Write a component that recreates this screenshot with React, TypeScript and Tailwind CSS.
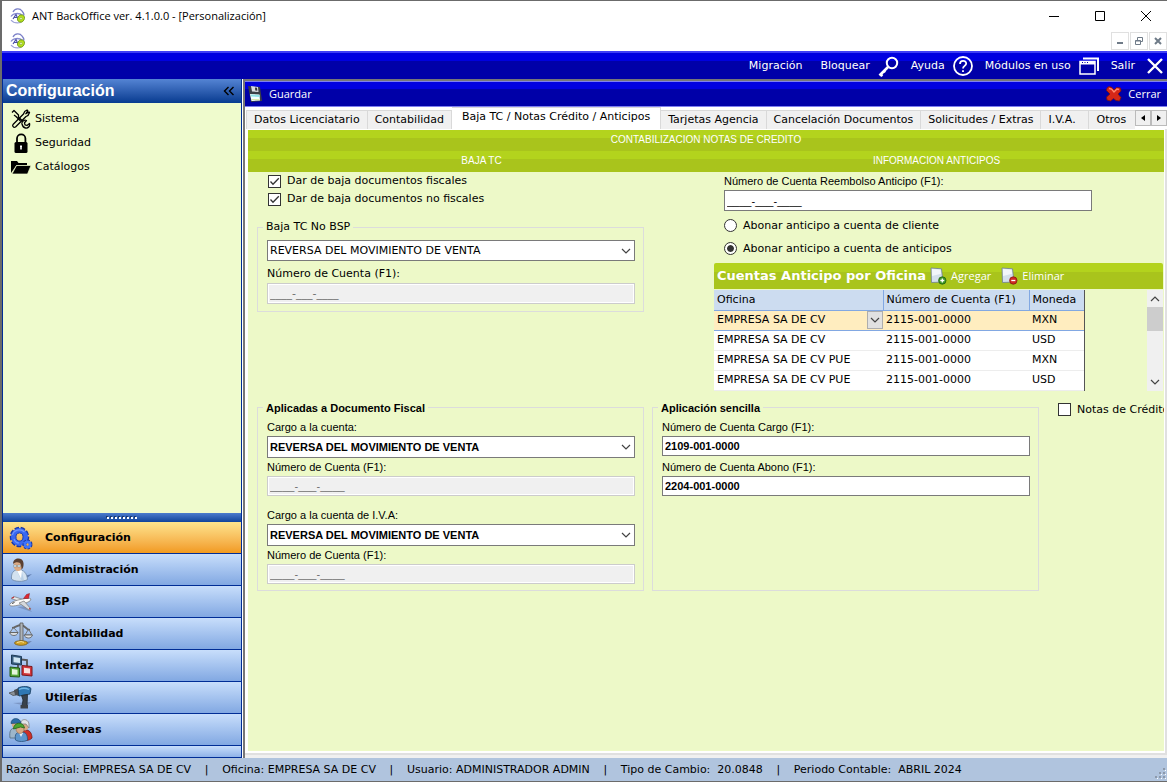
import { useState } from 'react';
import type { ReactNode } from 'react';

const tabs = [
  'Datos Licenciatario',
  'Contabilidad',
  'Baja TC / Notas Crédito / Anticipos',
  'Tarjetas Agencia',
  'Cancelación Documentos',
  'Solicitudes / Extras',
  'I.V.A.',
  'Otros',
];

const accounts = [
  { office: 'EMPRESA SA DE CV', account: '2115-001-0000', currency: 'MXN' },
  { office: 'EMPRESA SA DE CV', account: '2115-001-0000', currency: 'USD' },
  { office: 'EMPRESA SA DE CV PUE', account: '2115-001-0000', currency: 'MXN' },
  { office: 'EMPRESA SA DE CV PUE', account: '2115-001-0000', currency: 'USD' },
];

const status = [
  'Razón Social: EMPRESA SA DE CV',
  'Oficina: EMPRESA SA DE CV',
  'Usuario: ADMINISTRADOR ADMIN',
  'Tipo de Cambio:  20.0848',
  'Periodo Contable:  ABRIL 2024',
];

const MASK = '____-___-____';

function LogoIcon() {
  return (
    <svg width="16" height="16" viewBox="0 0 16 16" fill="none" className="shrink-0">
      <path d="M3 4C5 0 10 0 12 3c1.500 1.500 2 3 2 4.500" stroke="#7b80c8" strokeWidth="1.300" />
      <path d="M1 8.500C3 5 9 4.500 13 7.500" stroke="#8a8ed0" strokeWidth="1.300" />
      <path d="M1 12c2 2.500 6 3.500 10 2.500" stroke="#9ea2d8" strokeWidth="1.200" />
      <path d="M3 11l3-4.500L8 11M4.500 9.500h4" stroke="#4a50a8" strokeWidth="1.200" />
      <ellipse cx="11" cy="10.500" rx="3.300" ry="3.800" fill="#b6e01c" stroke="#6f9a1e" strokeWidth=".8" transform="rotate(25 11 10.5)" />
      <circle cx="11" cy="10.500" r="1.200" fill="#eefac0" stroke="#6f9a1e" strokeWidth=".5" />
    </svg>
  );
}

function KeyIcon() {
  return (
    <svg width="21" height="21" viewBox="0 0 21 21" fill="none" stroke="#fff" className="shrink-0">
      <circle cx="14" cy="7" r="5.200" strokeWidth="2" />
      <path d="M10 11l-8.500 8.500M2 18l2.500 2M5.500 14.500l1.500 2" strokeWidth="2.600" />
    </svg>
  );
}

function HelpIcon() {
  return (
    <svg width="20" height="20" viewBox="0 0 20 20" fill="none" stroke="#fff" strokeWidth="1.800" className="shrink-0">
      <circle cx="10" cy="10" r="9" />
      <path d="M7 8c0-4 6.200-4 6.200-.5C13.200 10 10 9.800 10 12.500" />
      <path d="M10 14.200v1.800" />
    </svg>
  );
}

function WindowsIcon() {
  return (
    <svg width="20" height="18" viewBox="0 0 20 18" fill="none" stroke="#fff" className="shrink-0">
      <path d="M4 1.500h15V14" strokeWidth="2" />
      <path d="M1 4.500h15V17H1z" strokeWidth="1.500" />
      <path d="M1 6h15" strokeWidth="3" />
      <path d="M3 5.500h1M5.500 5.500h1M8 5.500h1" stroke="#0000a8" />
    </svg>
  );
}

function CrossIcon() {
  return (
    <svg width="16" height="16" viewBox="0 0 16 16" stroke="#fff" strokeWidth="2.400" className="shrink-0">
      <path d="M1 1l14 14M15 1L1 15" />
    </svg>
  );
}

function FloppyIcon() {
  return (
    <svg width="16" height="18" viewBox="0 0 16 18" className="shrink-0">
      <path d="M1 1l12 1 2 14-11 1z" fill="#3a3f44" />
      <path d="M4 1l7 1 .5 5-6.500-.5z" fill="#d9dcdf" />
      <path d="M8 2.500l2 .2.300 3-2-.2z" fill="#333" />
      <path d="M3 9l9.500.5.500 6-8.500.5z" fill="#f4ffff" />
      <path d="M3.500 9.500l9 .5.200 2-8.700-.5z" fill="#8fe3e6" />
      <path d="M4.500 14.500l8 .2" stroke="#d8e8a0" />
    </svg>
  );
}

function CloseRedIcon() {
  return (
    <svg width="16" height="16" viewBox="0 0 16 16" className="shrink-0">
      <path d="M3 .5l3 1 2 2.500 2.500-2.500 4 .5.500 3-3 3 3 3.500-1.500 3.500-3.500-.5-2.500-2-3 2.500-3.500-1-.5-3L4 8 .5 4.500 1 2z" fill="#d62718" stroke="#7e130c" strokeWidth=".8" />
      <path d="M3 2.500l2.500.5L8 6l3-3 2 .5" stroke="#ff8a72" strokeWidth="1.300" fill="none" />
    </svg>
  );
}

function ToolsIcon() {
  return (
    <svg width="20" height="20" viewBox="0 0 20 20" fill="none" stroke="#000" strokeWidth="1.300" strokeLinejoin="round" className="shrink-0">
      <path d="M2 15.500L12.500 5c.5-2 2-3.500 3.500-4l.8.800-2 3L18 3l.5.500c-.5 2-2 3.500-3.500 4L4.500 18c-2 1-3.500-1-2.500-2.500z" />
      <path d="M1 3.500l2-2L7.500 6v2l4 4M3 6l2 1.500 4.500 4.500" />
      <path d="M11 15c-.5-2.500 2-4.500 4.500-3.500l-2 2.300.5 2 2 .7 2.500-2c.7 3-1.500 5-4 4.500-2-.3-3-2-3.500-4z" />
    </svg>
  );
}

function LockIcon() {
  return (
    <svg width="20" height="20" viewBox="0 0 20 20" className="shrink-0">
      <path d="M6 10V5.500a4.200 4.200 0 0 1 8.400 0V10" fill="none" stroke="#000" strokeWidth="1.800" />
      <rect x="3.500" y="9" width="13" height="11" rx="1.500" fill="#000" />
      <path d="M10 12.500v4M9 13.300h2" stroke="#fff" strokeWidth="1.600" />
    </svg>
  );
}

function FolderIcon() {
  return (
    <svg width="20" height="14" viewBox="0 0 20 14" className="shrink-0">
      <path d="M0 13V1h6l1.500 2H16v2H5.500z" fill="#000" />
      <path d="M5.500 5.500H20L16.500 14H1z" fill="#000" stroke="#effbcd" strokeWidth=".7" />
    </svg>
  );
}

function GearsIcon() {
  return (
    <svg width="24" height="24" viewBox="0 0 24 24" fill="none" className="shrink-0">
      <ellipse cx="10.500" cy="11" rx="6.500" ry="7" stroke="#1838a8" strokeWidth="6.500" strokeDasharray="3.400 1.200" />
      <ellipse cx="10.500" cy="11" rx="6" ry="6.500" stroke="#3a68f0" strokeWidth="5" />
      <path d="M3.500 9c1-5 8-7 12-3M5 13c1 3 3 4 5 4" stroke="#6d96ff" strokeWidth="1.200" />
      <ellipse cx="10.500" cy="11" rx="3.600" ry="4.200" stroke="#1838a8" strokeWidth=".7" />
      <circle cx="18.500" cy="18.500" r="3.200" stroke="#1838a8" strokeWidth="3.600" strokeDasharray="2 .9" />
      <circle cx="18.500" cy="18.500" r="2.600" stroke="#3f74fa" strokeWidth="2.600" />
    </svg>
  );
}

function PersonIcon() {
  return (
    <svg width="24" height="24" viewBox="0 0 24 24" className="shrink-0">
      <path d="M15 18l8-2-5 4z" fill="#5f7cae" />
      <path d="M2.500 21c-.5-6 2-9 6.500-9.500 6 0 9 4 9.500 10-4 2.500-13 2.500-16-.5z" fill="#d3e2f0" stroke="#6d87a5" strokeWidth=".8" />
      <path d="M8 13l5 1 2 8h-3z" fill="#b9d0e6" />
      <path d="M8 12.500l4 8 1-8z" fill="#fff" />
      <ellipse cx="9" cy="7.500" rx="4.300" ry="5.500" fill="#dcaa84" />
      <path d="M4 6C4-1 14-1 14.500 5c.3 3-.5 5.500-2 6.500 0-3-.5-5-1.500-6.500-2-1-5-1-7 1z" fill="#5a4032" />
      <path d="M4.500 7h3v2h-3zM8.500 7h3v2h-3z" fill="#cfe4ee" stroke="#777" strokeWidth=".4" />
    </svg>
  );
}

function PlaneIcon() {
  return (
    <svg width="24" height="24" viewBox="0 0 24 24" className="shrink-0">
      <path d="M8 17l10-1 5 6-6-2z" fill="#7b95c4" />
      <path d="M2 8.500l3-2 9 3-3 2z" fill="#e6e8ea" stroke="#777" strokeWidth=".7" />
      <path d="M1 14c2-3 11-5 19-6l2 1-1 2c-5 3-14 5-18 5-2 0-3-1-2-2z" fill="#fafafa" stroke="#777" strokeWidth=".7" />
      <path d="M10 13l5-2 7 8-2 1z" fill="#d6d9dd" stroke="#777" strokeWidth=".7" />
      <path d="M14.500 8.500l3-4 3-1-1 5z" fill="#e02832" stroke="#871820" strokeWidth=".5" />
      <path d="M3 8.300l2-1.300M20 18.500l1.500.5" stroke="#c0303a" strokeWidth="1.200" />
      <path d="M3 13.500l2.500-1" stroke="#444" />
    </svg>
  );
}

function ScaleIcon() {
  return (
    <svg width="24" height="24" viewBox="0 0 24 24" className="shrink-0">
      <path d="M14 20l9-1-4 3z" fill="#6c83ad" />
      <path d="M3 6c3 0 5-3 9-3s5 5 9 5" fill="none" stroke="#666" strokeWidth="1.800" />
      <path d="M4 6L1 10.500h8L5 6M19 8l-3 5h7l-3-5" fill="none" stroke="#777" />
      <path d="M.5 10.500H9c-1 4-7 4-8.500 0zM15 13h8.500c-1 4-7 4-8.500 0z" fill="#dcdfe2" stroke="#555" strokeWidth=".8" />
      <path d="M11 1h3v18h-3z" fill="#aeb4b9" stroke="#555" strokeWidth=".8" />
      <ellipse cx="12" cy="21" rx="6.500" ry="2.300" fill="#d4a429" stroke="#7a5a12" strokeWidth=".8" />
      <path d="M8 20.500l4-1 3 .8" stroke="#f6e09a" fill="none" />
    </svg>
  );
}

function ModulesIcon() {
  return (
    <svg width="24" height="24" viewBox="0 0 24 24" className="shrink-0">
      <path d="M12 5.500l6 .5v7M9 10v4" fill="none" stroke="#555" strokeWidth="1.800" />
      <path d="M2.500 1l10 1.500V11l-10-1z" fill="#3a5f80" stroke="#1e3b56" />
      <path d="M4.500 3l6.500 1v5l-6.500-.7z" fill="#cfe6f2" />
      <path d="M1 13l9.500 1v9L1 22.500z" fill="#57a83a" stroke="#235718" />
      <path d="M3 15l5.500.7v5l-5.500-.2z" fill="#e5f5dc" />
      <path d="M13 11.500l10 1V22l-10-1z" fill="#d4373b" stroke="#7b171c" />
      <path d="M15 13.800l6 .7v5l-6-.6z" fill="#fae2e0" />
    </svg>
  );
}

function DrillIcon() {
  return (
    <svg width="24" height="24" viewBox="0 0 24 24" className="shrink-0">
      <path d="M4 17l18-1-4 4z" fill="#7b95c4" />
      <path d="M0 7l6-2 1 4-3 .5z" fill="#8c9298" stroke="#444" strokeWidth=".7" />
      <path d="M5 4l5-2v8l-4-1z" fill="#4a4e53" />
      <path d="M9 2c4-2 11-2 13 .5L21 8 10 10z" fill="#2f78b4" stroke="#143a5c" strokeWidth=".8" />
      <path d="M10 3.500c3-1.500 7-1.500 10 0" stroke="#72b7e6" strokeWidth="1.300" fill="none" />
      <path d="M12.500 9.500l6-1L18 20h-5l1-6z" fill="#39424c" stroke="#1e2933" strokeWidth=".8" />
      <path d="M11.500 19h7.500v3.500h-7.500z" fill="#3c4046" />
    </svg>
  );
}

function PeopleIcon() {
  return (
    <svg width="24" height="24" viewBox="0 0 24 24" className="shrink-0">
      <path d="M13 21c-1-6 1-9 5-9 4 1 5 5 5 8-3 3-7 3-10 1z" fill="#cd3028" stroke="#731814" strokeWidth=".8" />
      <ellipse cx="16" cy="7.500" rx="3.800" ry="5" fill="#d7a984" />
      <path d="M11.500 6c0-6 8.500-6 8.500 1v3l-3-4z" fill="#e2e4e6" stroke="#777" strokeWidth=".7" />
      <path d="M1 20c-1-7 1-10 5-10s7 4 7 10z" fill="#9db6ca" stroke="#50697f" strokeWidth=".8" />
      <ellipse cx="6.500" cy="6" rx="3.800" ry="4.500" fill="#d7a984" />
      <path d="M2 5.500C2-1 11-1 12 5z" fill="#2d6da8" stroke="#17436b" strokeWidth=".6" />
      <path d="M6.500 22c-1-6 1-8 5.500-8s6.500 2 6.500 8c-3 2-9 2-12 0z" fill="#5e96cc" stroke="#28527d" strokeWidth=".8" />
      <path d="M10 15l2 4 2-4z" fill="#e8f0f8" />
      <ellipse cx="11" cy="11" rx="4" ry="4.500" fill="#d7a984" stroke="#865d40" strokeWidth=".5" />
      <path d="M4.500 11c0-7 10-8 11-1l-4-1z" fill="#4ca62f" stroke="#23651a" strokeWidth=".8" />
    </svg>
  );
}

function PageIcon({ remove }: { remove?: boolean }) {
  return (
    <svg width="17" height="18" viewBox="0 0 17 18" className="shrink-0">
      <path d="M1 1l10.500.8L13 15l-11.500.5z" fill="#d4e0ec" stroke="#6f7f90" strokeWidth=".8" />
      <path d="M2 2l8.500.8.600 4L2 9z" fill="#f2f6fa" />
      <circle cx="12.300" cy="13.500" r="3.700" fill={remove ? '#cf2b24' : '#3f9a26'} stroke={remove ? '#861510' : '#205c12'} strokeWidth=".8" />
      <path d={remove ? 'M10.300 13.500h4' : 'M10.300 13.500h4M12.300 11.500v4'} stroke="#fff" strokeWidth="1.300" />
    </svg>
  );
}

function Chevron({ className = '' }: { className?: string }) {
  return (
    <svg width="10" height="6" viewBox="0 0 10 6" fill="none" stroke="#444" strokeWidth="1.200" className={className}>
      <path d="M1 1l4 4 4-4" />
    </svg>
  );
}

const navItems = [
  { name: 'Configuración', icon: <GearsIcon /> },
  { name: 'Administración', icon: <PersonIcon /> },
  { name: 'BSP', icon: <PlaneIcon /> },
  { name: 'Contabilidad', icon: <ScaleIcon /> },
  { name: 'Interfaz', icon: <ModulesIcon /> },
  { name: 'Utilerías', icon: <DrillIcon /> },
  { name: 'Reservas', icon: <PeopleIcon /> },
];

function TextField({ id, label, value, disabled, className }: { id: string; label: string; value: string; disabled?: boolean; className: string }) {
  return (
    <div className="flex flex-col gap-0.5">
      <label htmlFor={id} className="h-3.5 leading-[14px] whitespace-nowrap">{label}</label>
      <input
        id={id}
        defaultValue={value}
        disabled={disabled}
        className={`${className} w-full border border-[#7a7a7a] bg-white px-0.5 disabled:border-[#ccc] disabled:bg-[#f0f0f0] disabled:text-[#6d6d6d] disabled:shadow-[inset_0_0_0_1px_#fff]`}
      />
    </div>
  );
}

function Select({ id, className, label }: { id: string; className: string; label?: string }) {
  return (
    <div className="relative flex">
      <select id={id} aria-label={label} className={`${className} w-full appearance-none border border-[#7a7a7a] bg-white px-0.5`}>
        <option>REVERSA DEL MOVIMIENTO DE VENTA</option>
      </select>
      <Chevron className="pointer-events-none absolute top-2 right-1" />
    </div>
  );
}

function CheckBox({ label, checked }: { label: string; checked?: boolean }) {
  return (
    <label className="flex h-[18px] items-center gap-1.5 whitespace-nowrap">
      <span className="relative flex">
        <input type="checkbox" defaultChecked={checked} className="peer size-[13px] appearance-none border border-[#333] bg-white" />
        <svg width="13" height="13" viewBox="0 0 13 13" fill="none" stroke="#333" strokeWidth="1.300" className="pointer-events-none absolute inset-0 hidden peer-checked:block">
          <path d="M2.500 6.500L5 9.200l5.800-6" />
        </svg>
      </span>
      {label}
    </label>
  );
}

function MdiButton({ label, children }: { label: string; children: ReactNode }) {
  return (
    <button aria-label={label} className="flex h-[18px] w-[18px] items-center justify-center border border-[#e0e0e0]">
      {children}
    </button>
  );
}

function TitleBar() {
  return (
    <header className="bg-white">
      <div className="flex h-[30px] items-center pl-2">
        <LogoIcon />
        <h1 className="ml-1.5 font-['Open_Sans','Noto_Sans',sans-serif] text-[11px]">ANT BackOffice ver. 4.1.0.0 - [Personalización]</h1>
        <div className="ml-auto flex items-center gap-9 pr-4">
          <button aria-label="Minimizar">
            <svg width="10" height="10" viewBox="0 0 10 10" stroke="#000"><path d="M0 5.500h10" /></svg>
          </button>
          <button aria-label="Maximizar">
            <svg width="10" height="10" viewBox="0 0 10 10" stroke="#000" fill="none"><path d="M.5.500h9v9h-9z" /></svg>
          </button>
          <button aria-label="Cerrar ventana">
            <svg width="10" height="10" viewBox="0 0 10 10" stroke="#000"><path d="M0 0l10 10M10 0L0 10" /></svg>
          </button>
        </div>
      </div>
      <div className="flex h-5 items-center pl-2">
        <LogoIcon />
        <div className="ml-auto flex gap-px">
          <MdiButton label="Minimizar documento">
            <svg width="8" height="8" viewBox="0 0 8 8" stroke="#6f7b88" strokeWidth="2"><path d="M1 6h6" /></svg>
          </MdiButton>
          <MdiButton label="Restaurar documento">
            <svg width="8" height="8" viewBox="0 0 8 8" stroke="#6f7b88" fill="none"><path d="M2.500 3V.500h5v4H6M.5 3.500h5v4h-5zM.5 4h5" /></svg>
          </MdiButton>
          <MdiButton label="Cerrar documento">
            <svg width="8" height="8" viewBox="0 0 8 8" stroke="#6f7b88" strokeWidth="2"><path d="M1 1l6 6M7 1L1 7" /></svg>
          </MdiButton>
        </div>
      </div>
    </header>
  );
}

function Sidebar() {
  const [active, setActive] = useState('Configuración');

  return (
    <aside className="flex w-60 shrink-0 flex-col border-x border-[#002d96] bg-[#effbcd]">
      <div className="flex h-6 items-center justify-between bg-linear-to-b from-[#5484d4] to-[#053b90] pr-1.5 pl-[3px] text-white">
        <h2 className="font-['Liberation_Sans',sans-serif] text-base font-bold">Configuración</h2>
        <button aria-label="Contraer panel">
          <svg width="12" height="10" viewBox="0 0 12 10" fill="none" stroke="#000" strokeWidth="1.400"><path d="M5.500 1l-4 4 4 4M10.500 1l-4 4 4 4" /></svg>
        </button>
      </div>
      <nav className="flex flex-1 flex-col pt-1 pl-2">
        <a href="#sistema" className="flex h-6 items-center gap-1"><ToolsIcon />Sistema</a>
        <a href="#seguridad" className="flex h-6 items-center gap-1"><LockIcon />Seguridad</a>
        <a href="#catalogos" className="flex h-6 items-center gap-1"><FolderIcon />Catálogos</a>
      </nav>
      <div className="flex h-[9px] items-center justify-center gap-0.5 bg-linear-to-b from-[#4b7ccd] to-[#0e439a]">
        {Array.from({ length: 8 }, (_, i) => (
          <span key={i} className="size-0.5 bg-white shadow-[-1px_-1px_0_#1c3a70]" />
        ))}
      </div>
      <nav className="flex flex-col text-[11px] font-bold">
        {navItems.map((item) => (
          <button
            key={item.name}
            onClick={() => setActive(item.name)}
            className={`flex h-8 items-center gap-3 border-b border-[#002d96] bg-linear-to-b pl-1.5 ${
              active === item.name ? 'from-[#fce48c] to-[#f19a1c]' : 'from-[#c8defb] to-[#82a8e2]'
            }`}
          >
            {item.icon}
            {item.name}
          </button>
        ))}
        <div className="h-3 border-b border-[#002d96] bg-linear-to-b from-[#c8defb] to-[#8fb2e8]" />
      </nav>
    </aside>
  );
}

function AccountsTable() {
  return (
    <div>
      <div className="flex h-[26px] items-center rounded-t-xs bg-linear-to-b from-[#b3d31d] from-35% to-[#a9c41c] to-35% pl-[3px] text-white">
        <h3 className="text-[13px] font-bold whitespace-nowrap">Cuentas Anticipo por Oficina</h3>
        <button className="ml-1 flex items-center gap-1 font-['Open_Sans','Noto_Sans',sans-serif] text-[11px]"><PageIcon />Agregar</button>
        <button className="ml-2.5 flex items-center gap-1 font-['Open_Sans','Noto_Sans',sans-serif] text-[11px]"><PageIcon remove />Eliminar</button>
      </div>
      <div className="mt-px flex justify-between">
        <div className="w-[371px] border-r border-[#555] bg-white">
          <table className="w-full table-fixed border-collapse text-left">
            <colgroup>
              <col className="w-[169px]" />
              <col className="w-[146px]" />
              <col />
            </colgroup>
            <thead>
              <tr className="h-5 bg-[#ccdcf0]">
                <th className="border-r border-b border-[#82a8e2] px-[3px] py-0 font-normal">Oficina</th>
                <th className="border-r border-b border-[#82a8e2] px-[3px] py-0 font-normal">Número de Cuenta (F1)</th>
                <th className="border-b border-[#82a8e2] px-[3px] py-0 font-normal">Moneda</th>
              </tr>
            </thead>
            <tbody>
              {accounts.map((row, i) => (
                <tr key={i} className={i === 0 ? 'h-5 border-b border-[#82a8e2] bg-[#ffedbf]' : 'h-5 border-b border-[#ededed]'}>
                  <td className="py-0 pl-[3px]">
                    {i === 0 ? (
                      <div className="relative flex">
                        <select aria-label="Oficina" className="h-[18px] w-full appearance-none bg-transparent">
                          <option>{row.office}</option>
                        </select>
                        <span className="pointer-events-none absolute inset-y-0 right-0 flex w-4 items-center justify-center border border-[#adadad] bg-[#e1e1e1]"><Chevron /></span>
                      </div>
                    ) : (
                      row.office
                    )}
                  </td>
                  <td className="px-[3px] py-0">{row.account}</td>
                  <td className="px-[3px] py-0">{row.currency}</td>
                </tr>
              ))}
            </tbody>
          </table>
        </div>
        <div className="flex w-4 flex-col items-center bg-[#f0f0f0]">
          <button aria-label="Subir" className="flex h-[17px] items-center"><Chevron className="rotate-180" /></button>
          <div className="h-6 w-full bg-[#cdcdcd]" />
          <button aria-label="Bajar" className="mt-auto flex h-[17px] items-center"><Chevron /></button>
        </div>
      </div>
    </div>
  );
}

function Radio({ label, checked }: { label: string; checked?: boolean }) {
  return (
    <label className="flex h-[23px] items-center gap-1.5">
      <input
        type="radio"
        name="abono"
        defaultChecked={checked}
        className="size-[13px] appearance-none rounded-full border border-[#333] bg-white bg-clip-content p-0.5 checked:bg-[#333] not-checked:bg-clip-border checked:shadow-[inset_0_0_0_2px_#fff]"
      />
      {label}
    </label>
  );
}

function FormPanel() {
  return (
    <div className="flex-1 overflow-hidden bg-[#edf9c8]">
      <div className="h-[21px] bg-linear-to-b from-[#b3d31d] from-38% to-[#a9c41c] to-38% text-center font-['Liberation_Sans',sans-serif] text-[10px] leading-[19px] text-white">
        CONTABILIZACION NOTAS DE CREDITO
      </div>
      <div className="grid h-[21px] grid-cols-2 bg-linear-to-b from-[#b3d31d] from-38% to-[#a9c41c] to-38% pl-1.5 text-center font-['Liberation_Sans',sans-serif] text-[10px] leading-[19px] text-white">
        <span>BAJA TC</span>
        <span>INFORMACION ANTICIPOS</span>
      </div>
      <div className="flex pl-[9px]">
        <div className="w-[387px] shrink-0">
          <div className="pl-[11px]">
            <CheckBox label="Dar de baja documentos fiscales" checked />
            <CheckBox label="Dar de baja documentos no fiscales" checked />
          </div>
          <fieldset className="mt-3 flex flex-col border border-[#dcdcdc] pt-1.5 pr-2 pb-[7px] pl-[9px]">
            <legend className="-ml-1 h-3.5 px-[3px] leading-[14px]">Baja TC No BSP</legend>
            <Select id="bajaTc" label="Baja TC No BSP" className="h-[21px]" />
            <div className="mt-1.5">
              <TextField id="bajaCuenta" label="Número de Cuenta (F1):" value={MASK} disabled className="h-[21px]" />
            </div>
          </fieldset>
        </div>
        <div className="ml-[70px] flex-1 pt-0.5">
          <div className="w-[378px] pl-2.5">
            <div className="font-['Liberation_Sans',sans-serif]">
              <TextField id="reembolso" label="Número de Cuenta Reembolso Anticipo (F1):" value={MASK} className="h-[21px]" />
            </div>
            <div className="pt-[3px]">
              <Radio label="Abonar anticipo a cuenta de cliente" />
              <Radio label="Abonar anticipo a cuenta de anticipos" checked />
            </div>
          </div>
          <div className="pt-[3px] pr-px">
            <AccountsTable />
          </div>
        </div>
      </div>
      <div className="mt-2.5 flex gap-2 pl-[9px]">
        <fieldset className="w-[387px] shrink-0 border border-[#dcdcdc] pt-[5px] pr-2 pb-1.5 pl-[9px] font-['Liberation_Sans',sans-serif]">
          <legend className="-ml-1 h-3.5 px-[3px] leading-[14px] font-bold">Aplicadas a Documento Fiscal</legend>
          <div className="flex flex-col gap-0.5">
            <label htmlFor="cargo" className="h-3.5 leading-[14px]">Cargo a la cuenta:</label>
            <Select id="cargo" className="h-[22px] font-bold" />
            <TextField id="cargoCuenta" label="Número de Cuenta (F1):" value={MASK} disabled className="h-5" />
          </div>
          <div className="mt-3 flex flex-col gap-0.5">
            <label htmlFor="iva" className="h-3.5 leading-[14px]">Cargo a la cuenta de I.V.A:</label>
            <Select id="iva" className="h-[22px] font-bold" />
            <TextField id="ivaCuenta" label="Número de Cuenta (F1):" value={MASK} disabled className="h-5" />
          </div>
        </fieldset>
        <fieldset className="w-[387px] shrink-0 border border-[#dcdcdc] pt-[5px] pr-2 pl-[9px] font-['Liberation_Sans',sans-serif]">
          <legend className="-ml-1 h-3.5 px-[3px] leading-[14px] font-bold">Aplicación sencilla</legend>
          <div className="flex flex-col gap-1">
            <TextField id="cuentaCargo" label="Número de Cuenta Cargo (F1):" value="2109-001-0000" className="h-5 font-bold" />
            <TextField id="cuentaAbono" label="Número de Cuenta Abono (F1):" value="2204-001-0000" className="h-5 font-bold" />
          </div>
        </fieldset>
        <div className="min-w-0 flex-1 overflow-hidden pl-[11px]">
          <CheckBox label="Notas de Crédito" />
        </div>
      </div>
    </div>
  );
}

function TabStrip() {
  const [active, setActive] = useState(2);

  return (
    <div className="flex h-[22px] items-end overflow-hidden pl-px">
      <div role="tablist" className="flex min-w-0 flex-1 items-end overflow-hidden">
        {tabs.map((tab, i) => (
          <button
            key={tab}
            role="tab"
            aria-selected={active === i}
            onClick={() => setActive(i)}
            className={`min-w-12 shrink-0 border-t border-r border-[#d9d9d9] text-left whitespace-nowrap first:border-l ${
              active === i ? 'h-[22px] bg-white px-2.5 pb-1' : 'h-[19px] bg-[#f0f0f0] px-[7px]'
            }`}
          >
            {tab}
          </button>
        ))}
      </div>
      <div className="flex h-[19px] shrink-0 items-start">
        <button aria-label="Pestañas anteriores" className="flex h-4 w-4 items-center justify-center border border-[#bbb] bg-[#f0f0f0]">
          <svg width="4" height="6" viewBox="0 0 4 6"><path d="M4 0v6L0 3z" /></svg>
        </button>
        <button aria-label="Pestañas siguientes" className="flex h-4 w-4 items-center justify-center border border-[#bbb] bg-[#f0f0f0]">
          <svg width="4" height="6" viewBox="0 0 4 6"><path d="M0 0v6l4-3z" /></svg>
        </button>
      </div>
    </div>
  );
}

export default function App() {
  return (
    <div className="flex min-h-screen flex-col border-t border-b border-l-2 border-[#6b6b6b] bg-white font-['DejaVu_Sans',Verdana,sans-serif] text-[11px] leading-4 text-black">
      <TitleBar />
      <nav className="flex h-7 items-center justify-end border-t-2 border-[#3f3ff5] bg-linear-to-b from-[#0000e0] from-32% to-[#0000a8] to-32% pr-1 text-white">
        <button className="mr-[18px]">Migración</button>
        <button className="mr-3 flex items-center gap-2">Bloquear<KeyIcon /></button>
        <button className="mr-3 flex items-center gap-2">Ayuda<HelpIcon /></button>
        <button className="mr-3 flex items-center gap-2">Módulos en uso<WindowsIcon /></button>
        <button className="flex items-center gap-3">Salir<CrossIcon /></button>
      </nav>
      <div className="flex flex-1">
        <Sidebar />
        <main className="ml-px flex min-w-0 flex-1 flex-col border-t-2 border-l-2 border-[#777] bg-white">
          <div className="flex h-[26px] items-center justify-between border-y border-[#7f7ff0] bg-linear-to-b from-[#0000e0] from-28% to-[#0000a8] to-28% pr-1.5 pl-0.5 font-['Open_Sans','Noto_Sans',sans-serif] text-white">
            <button className="flex items-center gap-1.5"><FloppyIcon />Guardar</button>
            <button className="flex items-center gap-1.5"><CloseRedIcon />Cerrar</button>
          </div>
          <TabStrip />
          <div className="flex flex-1 flex-col border-r-2 border-b-2 border-[#e0e0e0] pt-px pr-px pb-0.5 pl-[3px]">
            <FormPanel />
          </div>
          <div className="h-[3px] bg-[#f0f0f0]" />
        </main>
      </div>
      <footer className="flex h-[23px] items-center bg-[#b0c4de] pl-1 whitespace-pre">
        {status.map((item, i) => (
          <div key={item} className="flex">
            {i > 0 && <span className="w-[31px] text-center">|</span>}
            {item}
          </div>
        ))}
        <svg width="12" height="12" viewBox="0 0 12 12" fill="#8c99ab" className="mt-2 ml-auto">
          <path d="M8 0h2v2H8zM4 4h2v2H4zM8 4h2v2H8zM0 8h2v2H0zM4 8h2v2H4zM8 8h2v2H8z" />
          <path d="M10 2h1v1h-1zM6 6h1v1H6zM10 6h1v1h-1zM2 10h1v1H2zM6 10h1v1H6zM10 10h1v1h-1z" fill="#fff" />
        </svg>
      </footer>
    </div>
  );
}
